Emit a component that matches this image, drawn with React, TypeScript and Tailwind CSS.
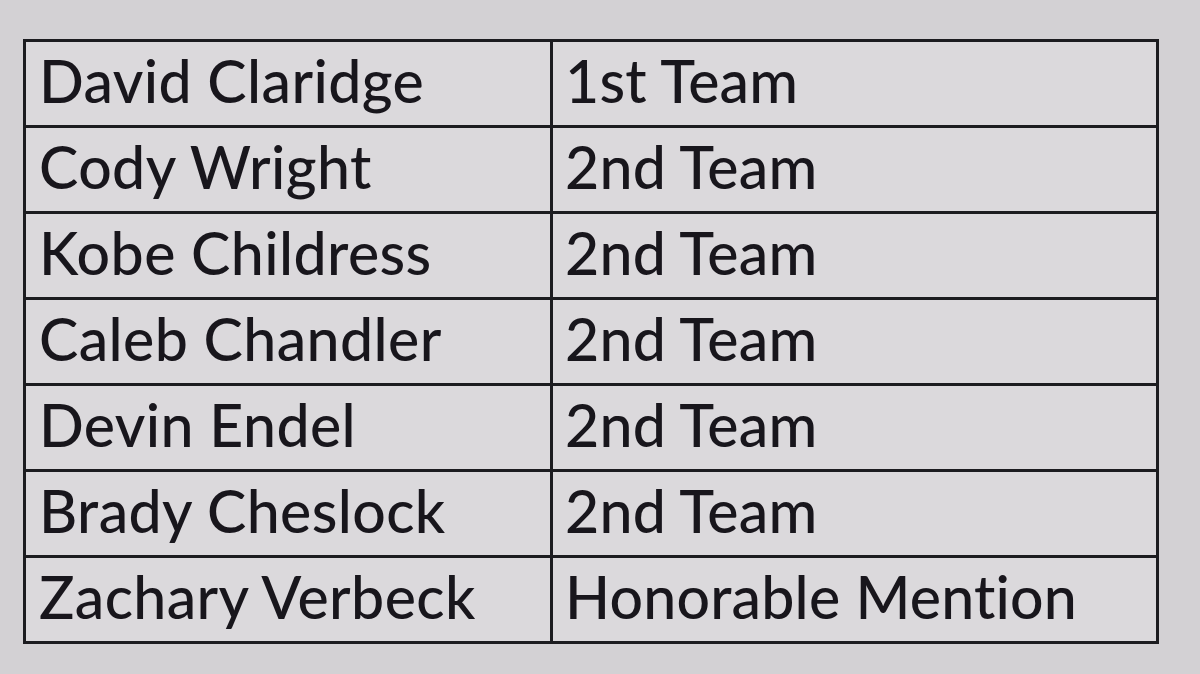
const rows: [string, string][] = [
  ["David Claridge", "1st Team"],
  ["Cody Wright", "2nd Team"],
  ["Kobe Childress", "2nd Team"],
  ["Caleb Chandler", "2nd Team"],
  ["Devin Endel", "2nd Team"],
  ["Brady Cheslock", "2nd Team"],
  ["Zachary Verbeck", "Honorable Mention"],
];

export default function App() {
  return (
    <div className="h-[674px] w-[1200px] overflow-hidden bg-[#d3d1d4] pl-[23px] pt-[39px] font-['Lato','Liberation_Sans',sans-serif]">
      <table className="w-[1136px] border-collapse border-[3px] border-[#1c1c20] bg-[#dbd9dc] text-[#18161c]">
        <tbody>
          {rows.map(([name, team]) => (
            <tr key={name} className="h-[86px]">
              <td className="w-[527px] border-[3px] border-[#1c1c20] pb-[6px] pl-[13px] align-middle text-[59px] font-medium leading-none tracking-[0.4px] blur-[0.6px]">
                {name}
              </td>
              <td className="border-[3px] border-[#1c1c20] pb-[6px] pl-[12px] align-middle text-[59px] font-medium leading-none tracking-[0.2px] blur-[0.6px]">
                {team}
              </td>
            </tr>
          ))}
        </tbody>
      </table>
    </div>
  );
}
